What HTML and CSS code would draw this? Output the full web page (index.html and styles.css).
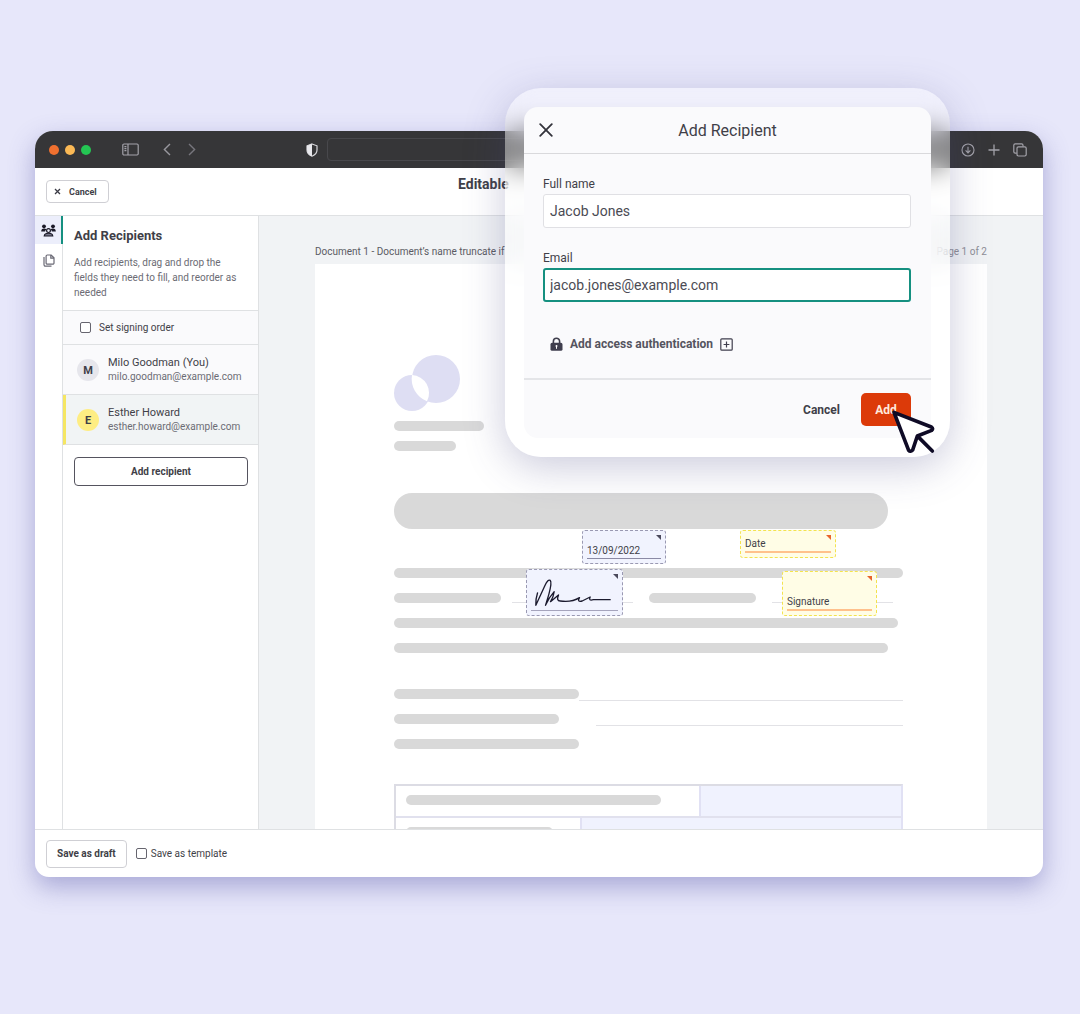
FILE: index.html
```html
<!DOCTYPE html>
<html lang="en">
<head>
    <meta charset="UTF-8">
    <title>Add Recipients</title>
    <link rel="stylesheet" href="styles.css">
</head>
<body>
    <div class="window">
        <div class="titlebar">
            <div class="titlebar-left">
                <span class="dot red"></span>
                <span class="dot yellow"></span>
                <span class="dot green"></span>
                <svg class="icon-sidebar" width="17" height="13" viewBox="0 0 17 13" fill="none" stroke="#a3a2a9" stroke-width="1.2"><rect x="0.8" y="1" width="15.4" height="11" rx="1.2"/><path d="M6 1v11M2.4 3.6h2M2.4 5.6h2M2.4 7.6h2"/></svg>
                <svg class="icon-back" width="8" height="13" viewBox="0 0 8 13" fill="none" stroke="#98979e" stroke-width="1.4"><path d="M7 1L1.4 6.5L7 12"/></svg>
                <svg class="icon-forward" width="8" height="13" viewBox="0 0 8 13" fill="none" stroke="#77767d" stroke-width="1.4"><path d="M1 1l5.6 5.5L1 12"/></svg>
                <svg class="icon-shield" width="12" height="14" viewBox="0 0 12 14"><path d="M6 1L11 2.8V7c0 3-2 5-5 6.2C3 12 1 10 1 7V2.8z" fill="none" stroke="#d8d8dc" stroke-width="1.2"/><path d="M6 1L1 2.8V7c0 3 2 5 5 6.2z" fill="#e8e8ec"/></svg>
            </div>
            <div class="address"></div>
            <div class="titlebar-right">
                <svg width="14" height="14" viewBox="0 0 14 14" fill="none" stroke="#a3a2a9" stroke-width="1.1"><circle cx="7" cy="7" r="6"/><path d="M7 3.8v6M4.6 7.4L7 9.9l2.4-2.5"/></svg>
                <svg width="12" height="12" viewBox="0 0 12 12" fill="none" stroke="#a3a2a9" stroke-width="1.3"><path d="M6 .5v11M.5 6h11"/></svg>
                <svg width="14" height="14" viewBox="0 0 14 14" fill="none" stroke="#a3a2a9" stroke-width="1.2"><rect x="4" y="3.8" width="9.2" height="9.2" rx="1.4"/><path d="M3.8 10.2H2.2A1.4 1.4 0 0 1 .8 8.8V2.2A1.4 1.4 0 0 1 2.2.8h6.4A1.4 1.4 0 0 1 10 2.2v1.4"/></svg>
            </div>
        </div>

        <header class="toolbar">
            <button class="btn btn-cancel">
                <svg width="7" height="7" viewBox="0 0 7 7" stroke="#3b3b45" stroke-width="1.3"><path d="M1 1l5 5M6 1L1 6"/></svg>
                Cancel
            </button>
            <h1>Editable</h1>
        </header>

        <main class="workspace">
            <nav class="rail">
                <button class="rail-tab active" aria-label="Recipients">
                    <svg width="15" height="13" viewBox="0 0 15 13" fill="#1b1a28"><circle cx="3" cy="2.3" r="1.9"/><circle cx="12" cy="2.3" r="1.9"/><path d="M.2 7.6c0-2.200 1-3.100 2.800-3.100 1 0 1.900.3 2.300 1-.8.6-1.100 1.200-1.100 2.100zM14.800 7.600c0-2.200-1-3.100-2.800-3.100-1 0-1.900.3-2.300 1 .8.6 1.100 1.200 1.100 2.100z"/><circle cx="7.5" cy="6.6" r="1.9" fill="none" stroke="#1b1a28" stroke-width="1.200"/><path d="M3.200 12c.2-1.900 1.500-2.800 4.300-2.800s4.100.9 4.300 2.800z" fill="#77778a" stroke="#1b1a28" stroke-width="1.100"/></svg>
                </button>
                <button class="rail-tab" aria-label="Documents">
                    <svg width="12" height="13" viewBox="0 0 12 13" fill="none" stroke="#6a6975" stroke-width="1.2"><path d="M4.300 1h3.900l2.800 2.800v5.200a1.200 1.200 0 0 1-1.200 1.200H4.300a1.200 1.200 0 0 1-1.200-1.200V2.200A1.200 1.200 0 0 1 4.300 1zM7.800 1v3.200H11"/><path d="M1 3v7.600A1.500 1.500 0 0 0 2.500 12.200h6"/></svg>
                </button>
            </nav>

            <aside class="sidebar">
                <div class="intro">
                    <h2>Add Recipients</h2>
                    <p>Add recipients, drag and drop the fields they need to fill, and reorder as needed</p>
                </div>
                <label class="signing-order"><input type="checkbox"> Set signing order</label>
                <div class="recipient">
                    <span class="avatar">M</span>
                    <div>
                        <div class="name">Milo Goodman (You)</div>
                        <div class="email">milo.goodman@example.com</div>
                    </div>
                </div>
                <div class="recipient selected">
                    <span class="avatar">E</span>
                    <div>
                        <div class="name">Esther Howard</div>
                        <div class="email">esther.howard@example.com</div>
                    </div>
                </div>
                <div class="add-row">
                    <button class="btn btn-add-recipient">Add recipient</button>
                </div>
            </aside>

            <section class="canvas">
                <div class="caption">
                    <span>Document 1 - Document’s name truncate if</span>
                    <span class="page-count">Page 1 of 2</span>
                </div>
                <div class="paper">
                    <div class="letterhead">
                        <svg width="66" height="56" viewBox="0 0 66 56" fill="#dedef3"><circle cx="42" cy="24" r="24"/><circle cx="18" cy="38" r="18"/><path d="M18 20A18 18 0 0 1 33 46.300A24 24 0 0 1 18 20z" fill="#fff"/></svg>
                        <div class="bar w-90"></div>
                        <div class="bar w-62"></div>
                    </div>
                    <div class="bar heading"></div>
                    <div class="lines">
                        <div class="line"><div class="bar full"></div></div>
                        <div class="line signatures">
                            <div class="bar w-107"></div>
                            <div class="sign-rule"></div>
                            <div class="bar w-107"></div>
                            <div class="sign-rule"></div>
                        </div>
                        <div class="line"><div class="bar wide"></div></div>
                        <div class="line"><div class="bar medium"></div></div>
                    </div>
                    <div class="lines form-lines">
                        <div class="line"><div class="bar w-185"></div><div class="rule"></div></div>
                        <div class="line"><div class="bar w-165"></div><div class="rule indent"></div></div>
                        <div class="line"><div class="bar w-185"></div></div>
                    </div>
                    <div class="grid">
                        <div class="grid-row">
                            <div class="cell"><div class="bar"></div></div>
                            <div class="cell fill"></div>
                        </div>
                        <div class="grid-row second">
                            <div class="cell"><div class="bar"></div></div>
                            <div class="cell fill"></div>
                        </div>
                    </div>

                    <!-- fields dropped on the page -->
                    <div class="field blue date-filled">
                        <svg class="corner" width="5" height="5" viewBox="0 0 5 5"><path d="M0 0h5v5z" fill="#4b4a5c"/></svg>
                        <span>13/09/2022</span>
                    </div>
                    <div class="field blue sign-filled">
                        <svg class="corner" width="5" height="5" viewBox="0 0 5 5"><path d="M0 0h5v5z" fill="#4b4a5c"/></svg>
                        <svg class="signature" viewBox="64 184 258 99" fill="none" stroke="#1b1a2e" stroke-width="4" stroke-linecap="round" stroke-linejoin="round"><path d="M82 232Q76 250 77 269L104 210Q113 190 120 194Q126 200 116 236L106 269Q116 246 132 228Q130 244 121 258L145 238Q138 256 150 256Q184 261 208 246Q200 260 216 256L240 244Q234 257 250 252H300"/></svg>
                    </div>
                    <div class="field yellow date-empty">
                        <svg class="corner" width="5" height="5" viewBox="0 0 5 5"><path d="M0 0h5v5z" fill="#e8642c"/></svg>
                        <span>Date</span>
                    </div>
                    <div class="field yellow sign-empty">
                        <svg class="corner" width="5" height="5" viewBox="0 0 5 5"><path d="M0 0h5v5z" fill="#e8642c"/></svg>
                        <span>Signature</span>
                    </div>
                </div>
            </section>
        </main>

        <footer class="bottom-bar">
            <button class="btn btn-draft">Save as draft</button>
            <label><input type="checkbox"> Save as template</label>
        </footer>
    </div>

    <div class="glass">
        <div class="modal" role="dialog" aria-labelledby="modal-title">
            <div class="modal-header">
                <button class="close" aria-label="Close">
                    <svg width="14" height="14" viewBox="0 0 14 14" stroke="#33333b" stroke-width="1.8" stroke-linecap="round"><path d="M1.200 1.200l11.600 11.600M12.800 1.200L1.200 12.800"/></svg>
                </button>
                <h2 id="modal-title">Add Recipient</h2>
            </div>
            <div class="modal-body">
                <div class="form-group">
                    <label for="fullName">Full name</label>
                    <input type="text" id="fullName" value="Jacob Jones">
                </div>
                <div class="form-group">
                    <label for="email">Email</label>
                    <input type="text" id="email" class="focused" value="jacob.jones@example.com">
                </div>
                <button class="auth">
                    <svg width="13" height="14" viewBox="0 0 13 14"><path d="M3.400 7V4.300a3.100 3.100 0 0 1 6.200 0V7" fill="none" stroke="#3f3e4d" stroke-width="1.600"/><rect x="0.500" y="5.800" width="12" height="8" rx="1.600" fill="#3f3e4d"/><circle cx="6.500" cy="9" r="1" fill="#fff"/><path d="M6.500 9v2.800" stroke="#fff" stroke-width="1"/></svg>
                    Add access authentication
                    <svg width="13" height="13" viewBox="0 0 13 13" fill="none" stroke="#3f3e4d" stroke-width="1.200"><rect x="0.800" y="0.800" width="11.400" height="11.400" rx="1"/><path d="M6.500 3.600v5.800M3.600 6.500h5.800"/></svg>
                </button>
            </div>
            <div class="modal-footer">
                <button class="modal-cancel">Cancel</button>
                <button class="modal-add">Add</button>
            </div>
        </div>
        <svg class="cursor" width="47" height="47" viewBox="330 264 141 141" fill="none" stroke="#0f0b26" stroke-width="11" stroke-linejoin="round" stroke-linecap="round"><path d="M342 277L454 321Q461 326 455 331L412 348L398 390Q391 397 386 391Z" fill="#fff"/><path d="M414 350L457 393"/></svg>
    </div>
</body>
</html>
```
FILE: styles.css
```css
:root {
    --page: #e7e7fa;
    --dark: #363638;
    --text: #3f3f48;
    --muted: #6c6c74;
    --line: #dfe1e3;
    --bar: #d9d9d9;
    --soft: #fafafc;
    --teal: #159080;
    --orange: #dc3a09;
}

* {
    box-sizing: border-box;
}

body {
    margin: 0;
    height: 100vh;
    padding: 131px 37px 137px 35px;
    background: var(--page);
    color: var(--text);
    font-family: Roboto, "Noto Sans", sans-serif;
    font-size: 10px;
    overflow: hidden;
}

h1, h2, p {
    margin: 0;
}

button {
    font-family: inherit;
    color: inherit;
    padding: 0;
    border: none;
    background: none;
    cursor: pointer;
}

input[type="checkbox"] {
    appearance: none;
    width: 11px;
    height: 11px;
    margin: 0;
    border: 1px solid #66656f;
    border-radius: 2px;
    background: white;
}

/* Browser window */
.window {
    height: 100%;
    display: flex;
    flex-direction: column;
    background: white;
    border-radius: 18px 18px 14px 14px;
    overflow: hidden;
    box-shadow: 0 10px 26px rgba(92, 92, 170, 0.45);
}

.titlebar {
    flex: none;
    display: grid;
    grid-template-columns: 1fr 424px 1fr;
    align-items: center;
    height: 37px;
    background: var(--dark);
}

.titlebar-left,
.titlebar-right {
    display: flex;
    align-items: center;
}

.titlebar-left {
    padding: 0 9px 0 14px;
    gap: 6px;
}

.titlebar-right {
    justify-content: flex-end;
    gap: 13px;
    padding-right: 16px;
}

.dot {
    width: 10px;
    height: 10px;
    border-radius: 50%;
}

.dot.red { background: #f0702f; }
.dot.yellow { background: #fbb955; }
.dot.green { background: #24c653; }

.icon-sidebar { margin-left: 25px; }
.icon-back { margin-left: 18px; }
.icon-forward { margin-left: 11px; }
.icon-shield { margin-left: auto; }

.address {
    height: 23px;
    border: 1px solid #48484c;
    border-radius: 4px;
}

/* Toolbar */
.toolbar {
    flex: none;
    display: grid;
    grid-template-columns: 1fr 162px 1fr;
    height: 48px;
    border-bottom: 1px solid var(--line);
}

.toolbar h1 {
    font-size: 14px;
    line-height: 18px;
    padding-top: 7px;
}

.btn {
    border: 1px solid #cfcfd4;
    border-radius: 4px;
    background: white;
    font-size: 10px;
    font-weight: 700;
}

.btn-cancel {
    align-self: center;
    justify-self: start;
    display: flex;
    align-items: center;
    gap: 8px;
    height: 23px;
    margin-left: 11px;
    padding: 0 11px 0 7px;
    font-size: 9px;
}

/* Workspace */
.workspace {
    flex: 1;
    min-height: 0;
    display: flex;
}

.rail {
    width: 28px;
    border-right: 1px solid var(--line);
}

.rail-tab {
    display: flex;
    align-items: center;
    justify-content: center;
    width: 28px;
    height: 28px;
    margin-bottom: 2px;
}

.rail-tab.active {
    background: #eceefb;
    border-right: 2px solid var(--teal);
}

.sidebar {
    width: 196px;
    border-right: 1px solid var(--line);
}

.intro {
    height: 95px;
    padding: 11px;
    border-bottom: 1px solid var(--line);
}

.intro h2 {
    font-size: 13px;
    line-height: 18px;
    margin-bottom: 10px;
}

.intro p {
    line-height: 15px;
    color: var(--muted);
}

.signing-order {
    display: flex;
    align-items: center;
    gap: 8px;
    height: 34px;
    padding-left: 17px;
    background: var(--soft);
    border-bottom: 1px solid var(--line);
}

.recipient {
    display: flex;
    align-items: center;
    gap: 9px;
    height: 50px;
    padding-left: 14px;
    background: var(--soft);
    border-bottom: 1px solid var(--line);
}

.recipient.selected {
    background: #f1f4f5;
    border-left: 3px solid #f5e663;
    padding-left: 11px;
}

.avatar {
    width: 22px;
    height: 22px;
    border-radius: 50%;
    background: #e6e6ec;
    font-weight: 700;
    font-size: 11px;
    line-height: 23px;
    text-align: center;
}

.selected .avatar {
    background: #feed83;
}

.name {
    font-size: 11px;
    line-height: 15px;
}

.email {
    line-height: 14px;
    color: var(--muted);
}

.add-row {
    padding: 12px 10px 0 11px;
}

.btn-add-recipient {
    width: 100%;
    height: 29px;
    border-color: #55545f;
}

/* Document */
.canvas {
    flex: 1;
    min-width: 0;
    display: flex;
    flex-direction: column;
    padding: 0 56px;
    background: #f1f3f5;
    overflow: hidden;
}

.caption {
    flex: none;
    display: flex;
    justify-content: space-between;
    padding: 29px 0 5px;
    line-height: 14px;
    color: #5b5b63;
}

.page-count {
    color: #8e8e95;
}

.paper {
    position: relative;
    flex: none;
    padding: 91px 84px 0 79px;
    background: white;
}

.letterhead {
    display: flex;
    flex-direction: column;
    gap: 10px;
}

.bar {
    flex: none;
    height: 10px;
    border-radius: 5px;
    background: var(--bar);
}

.w-62 { width: 62px; }
.w-90 { width: 90px; }
.w-107 { width: 107px; }
.w-165 { width: 165px; }
.w-185 { width: 185px; }
.full { width: 100%; }
.wide { width: 99%; }
.medium { width: 97%; }

.heading {
    width: 97%;
    height: 36px;
    margin: 42px 0 39px;
    border-radius: 18px;
}

.lines {
    display: flex;
    flex-direction: column;
    gap: 15px;
}

.line {
    display: flex;
    height: 10px;
}

.line.signatures {
    padding-right: 10px;
}

.sign-rule {
    flex: 1;
    margin: 0 16px 0 11px;
    border-bottom: 1px solid #e2e2e6;
}

.sign-rule:last-child {
    margin: 0 0 0 16px;
}

.form-lines {
    margin: 36px 0 35px;
}

.rule {
    flex: 1;
    height: 12px;
    border-bottom: 1px solid #e2e2e6;
}

.rule.indent {
    margin-left: 37px;
}

.grid {
    border: 2px solid #dcdce4;
    border-right-color: #e1e1f4;
}

.grid-row {
    display: grid;
    grid-template-columns: 3fr 2fr;
    height: 32px;
    border-bottom: 2px solid #e1e1ee;
}

.grid-row.second {
    grid-template-columns: 4fr 7fr;
}

.cell {
    padding: 9px 10px;
}

.cell.fill {
    background: #f0f2fe;
    border-left: 2px solid #e1e1f4;
}

.cell .bar {
    width: 90%;
}

/* Fields */
.field {
    position: absolute;
    display: flex;
    flex-direction: column;
    justify-content: flex-end;
    padding: 4px;
    border: 1px dashed #9a99b2;
    border-radius: 3px;
    background: #f1f3fe;
}

.field span {
    line-height: 15px;
    border-bottom: 1px solid #8b8aa5;
}

.field.yellow {
    border-color: #f3e34f;
    background: #fffde6;
}

.field.yellow span {
    border-bottom: 2px solid #ffc18c;
}

.corner {
    position: absolute;
    top: 4px;
    right: 4px;
}

.date-filled {
    left: 267px;
    top: 266px;
    width: 84px;
    height: 34px;
}

.sign-filled {
    left: 211px;
    top: 305px;
    width: 97px;
    height: 47px;
}

.signature {
    width: 100%;
    height: 34px;
    border-bottom: 1px solid #a5a4bc;
}

.date-empty {
    left: 425px;
    top: 266px;
    width: 96px;
    height: 28px;
}

.sign-empty {
    left: 467px;
    top: 307px;
    width: 95px;
    height: 45px;
}

/* Bottom bar */
.bottom-bar {
    flex: none;
    display: flex;
    align-items: center;
    gap: 9px;
    height: 48px;
    padding: 0 11px;
    border-top: 1px solid var(--line);
}

.bottom-bar label {
    display: flex;
    align-items: center;
    gap: 4px;
}

.btn-draft {
    height: 28px;
    padding: 0 10px;
}

/* Dialog */
.glass {
    position: absolute;
    top: 88px;
    right: 130px;
    width: 445px;
    padding: 19px;
    border-radius: 36px;
    background: rgba(255, 255, 255, 0.38);
    backdrop-filter: blur(14px);
    box-shadow: 0 10px 40px rgba(70, 70, 130, 0.28);
}

.modal {
    border-radius: 14px;
    background: var(--soft);
    overflow: hidden;
}

.modal-header {
    display: grid;
    grid-template-columns: 44px 1fr 44px;
    align-items: center;
    height: 47px;
    border-bottom: 1px solid #d9d9dc;
}

.modal-header h2 {
    font-size: 16px;
    font-weight: 400;
    text-align: center;
}

.close {
    display: flex;
    justify-content: center;
}

.modal-body {
    padding: 22px 20px 26px 19px;
    border-bottom: 2px solid #e4e5e8;
}

.form-group {
    margin-bottom: 22px;
}

.form-group label {
    display: block;
    font-size: 12px;
    line-height: 16px;
    margin-bottom: 2px;
}

.form-group input {
    display: block;
    width: 100%;
    height: 34px;
    padding: 0 6px;
    border: 1px solid #e0e0e4;
    border-radius: 3px;
    background: white;
    color: #4b4b54;
    font-family: inherit;
    font-size: 14px;
}

.form-group input.focused {
    border: 2px solid var(--teal);
    padding: 0 5px;
    outline: none;
}

.auth {
    display: flex;
    align-items: center;
    gap: 7px;
    margin: 34px 0 0 7px;
    font-size: 12px;
    font-weight: 700;
    line-height: 16px;
    color: #55545f;
}

.modal-footer {
    display: flex;
    justify-content: flex-end;
    gap: 21px;
    padding: 13px 20px 12px;
}

.modal-footer button {
    height: 33px;
    font-size: 12px;
    font-weight: 700;
}

.modal-footer .modal-add {
    width: 50px;
    border-radius: 5px;
    background: var(--orange);
    color: #ffe9dc;
}

.cursor {
    position: absolute;
    right: 13px;
    top: 320px;
}
```
